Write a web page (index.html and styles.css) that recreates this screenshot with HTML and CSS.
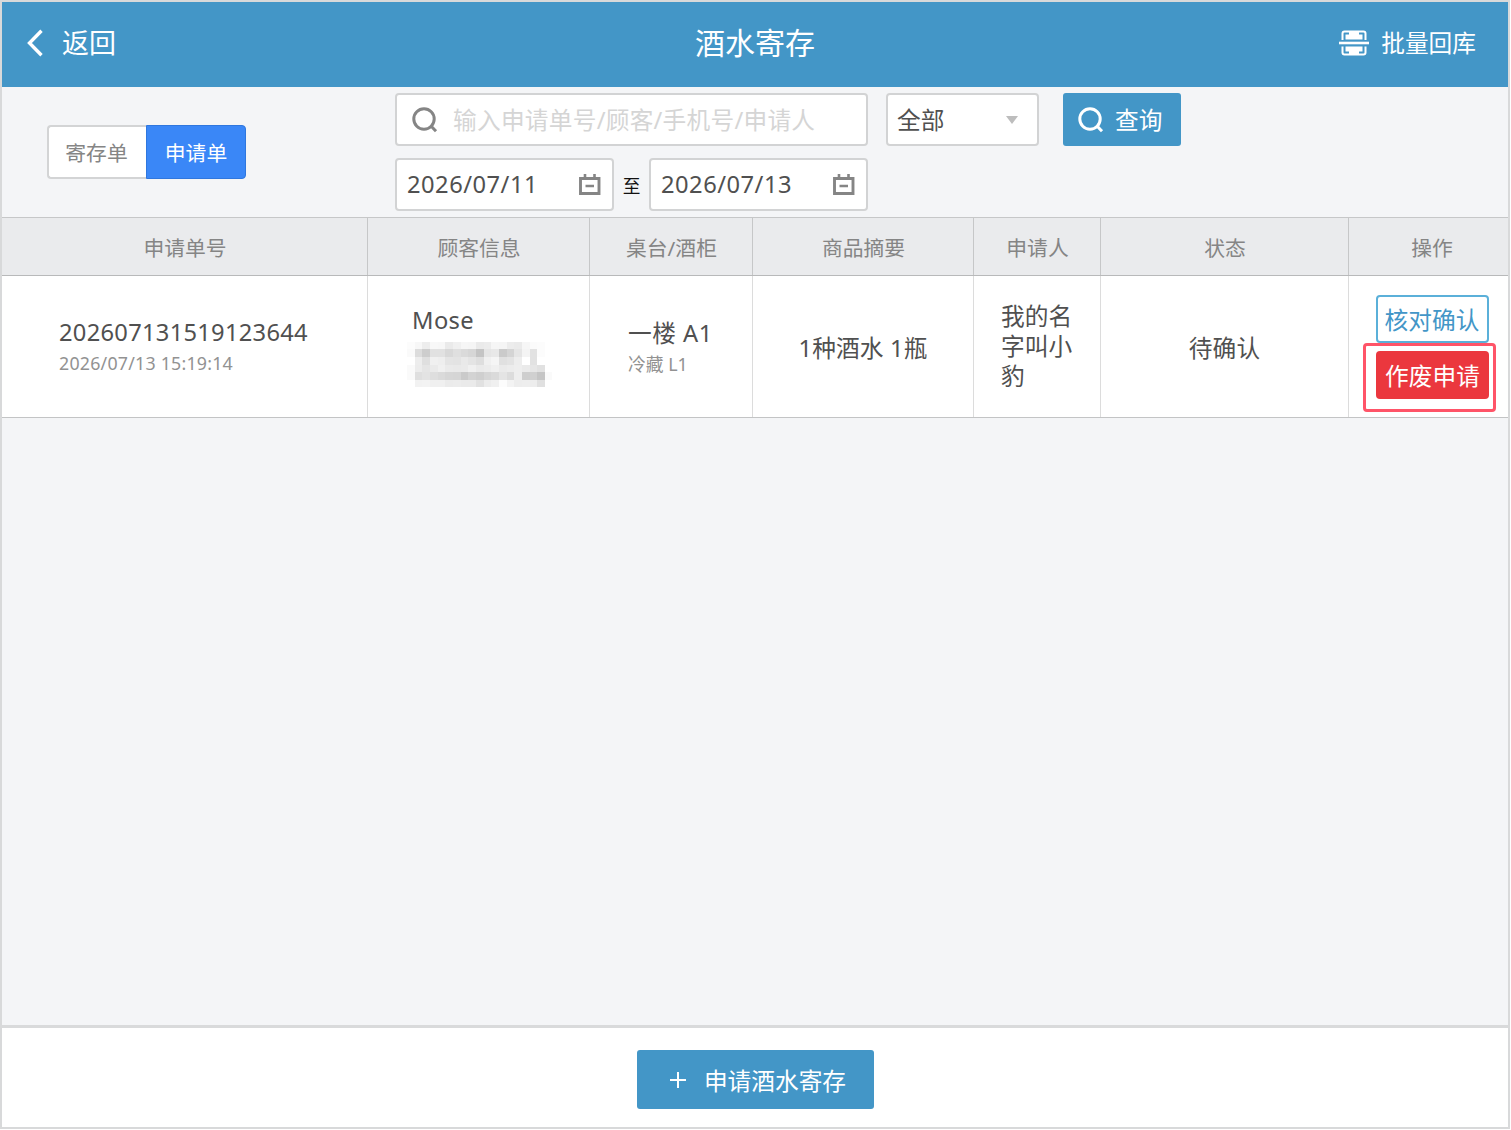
FILE: index.html
```html
<!DOCTYPE html>
<html lang="zh-CN">
<head>
<meta charset="utf-8">
<title>酒水寄存</title>
<link rel="stylesheet" href="styles.css">
</head>
<body>
<div class="app">
  <header class="topbar">
    <div class="back">
      <svg class="back-icon" width="18" height="28" viewBox="0 0 18 28"><path d="M15.500 1.800 3.500 14l12 12.200" fill="none" stroke="#fff" stroke-width="3.400"/></svg>
      <span>返回</span>
    </div>
    <h1 class="title">酒水寄存</h1>
    <div class="batch">
      <svg width="30" height="26" viewBox="0 0 30 26" fill="none" stroke="#fff">
        <path d="M3.500 10V3.500Q3.500 1.500 5.500 1.500H24.500Q26.500 1.500 26.500 3.500V10M3.500 16.500V22.500Q3.500 24.500 5.500 24.500H24.500Q26.500 24.500 26.500 22.500V16.500" stroke-width="2"/>
        <path d="M0 13H30" stroke-width="2.600"/>
        <path d="M10 2H20V4.500H23.500V9.500H6.500V4.500H10ZM6.500 16.500H23.500V21.500H20V24H10V21.500H6.500Z" fill="#fff" stroke="none"/>
      </svg>
      <span>批量回库</span>
    </div>
  </header>

  <section class="filters">
    <div class="tabs">
      <button class="tab">寄存单</button>
      <button class="tab tab-active">申请单</button>
    </div>
    <div class="fields">
      <div class="line">
        <div class="box search">
          <svg width="26" height="26" viewBox="0 0 26 26" fill="none" stroke="#858585" stroke-width="3"><circle cx="12" cy="12" r="10.200"/><path d="M18.500 18.500 24 24.300"/></svg>
          <span class="placeholder">输入申请单号/顾客/手机号/申请人</span>
        </div>
        <div class="box select"><span>全部</span><i class="caret"></i></div>
        <button class="query">
          <svg width="26" height="26" viewBox="0 0 26 26" fill="none" stroke="#fff" stroke-width="3"><circle cx="12" cy="12" r="10.200"/><path d="M18.500 18.500 24 24.300"/></svg>
          <span>查询</span>
        </button>
      </div>
      <div class="line">
        <div class="box date"><span>2026/07/11</span>
          <svg width="22" height="22" viewBox="0 0 22 22" fill="none" stroke="#858585"><path d="M1.500 4.500H20V19.500H1.500Z" stroke-width="2.900"/><path d="M6 0V5M15.500 0V5M6.500 12H15" stroke-width="2.600"/></svg>
        </div>
        <span class="to">至</span>
        <div class="box date"><span>2026/07/13</span>
          <svg width="22" height="22" viewBox="0 0 22 22" fill="none" stroke="#858585"><path d="M1.500 4.500H20V19.500H1.500Z" stroke-width="2.900"/><path d="M6 0V5M15.500 0V5M6.500 12H15" stroke-width="2.600"/></svg>
        </div>
      </div>
    </div>
  </section>

  <section class="table">
    <div class="row head">
      <div>申请单号</div><div>顾客信息</div><div>桌台/酒柜</div><div>商品摘要</div><div>申请人</div><div>状态</div><div>操作</div>
    </div>
    <div class="row record">
      <div class="cell order"><p class="main">202607131519123644</p><p class="sub">2026/07/13 15:19:14</p></div>
      <div class="cell customer"><p class="main">Mose</p><div class="mosaic" id="mosaic"></div></div>
      <div class="cell place"><p class="main">一楼 A1</p><p class="sub">冷藏 L1</p></div>
      <div class="cell center">1种酒水 1瓶</div>
      <div class="cell applicant">我的名字叫小豹</div>
      <div class="cell center">待确认</div>
      <div class="cell actions">
        <button class="confirm">核对确认</button>
        <div class="highlight"><button class="void">作废申请</button></div>
      </div>
    </div>
  </section>

  <footer class="bottombar">
    <button class="create">
      <svg width="18" height="18" viewBox="0 0 18 18"><path d="M9 1V17M1 9H17" stroke="#fff" stroke-width="2"/></svg>
      <span>申请酒水寄存</span>
    </button>
  </footer>
</div>
<script src="mosaic.js"></script>
</body>
</html>
```
FILE: styles.css
```css
* { box-sizing: border-box; }
body {
  margin: 0;
  background: #fff;
  color: #505050;
  font-family: "Noto Sans", "Noto Sans CJK SC", sans-serif;
  font-size: 23.7px;
}
h1, p { margin: 0; font-weight: 400; }
button { margin: 0; padding: 0; border: 0; font: inherit; }
svg { display: block; flex: none; }

.app {
  display: flex;
  flex-direction: column;
  width: 1510px;
  height: 1129px;
  border: 2px solid #d8d9da;
  background: #f4f5f7;
}

.topbar {
  display: grid;
  grid-template-columns: 1fr auto 1fr;
  align-items: center;
  height: 85px;
  padding: 0 32px 3px 24px;
  background: #4396c7;
  color: #fff;
}
.back { display: flex; align-items: center; gap: 18px; font-size: 27px; line-height: 40px; }
.title { padding-left: 8px; font-size: 30px; line-height: 40px; }
.batch { display: flex; align-items: center; justify-content: flex-end; gap: 12px; line-height: 36px; }

.filters { display: flex; height: 130px; padding-left: 45px; }
.tabs { display: flex; width: 199px; height: 54px; margin: 38px 149px 0 0; font-size: 20.8px; }
.tab {
  width: 99px;
  border: 2px solid #d3d4d5;
  border-right: 0;
  border-radius: 4px 0 0 4px;
  background: #fff;
  color: #858585;
}
.tab:first-child { padding-right: 2px; }
.tab-active {
  width: 100px;
  border: 1px solid #2f77de;
  border-radius: 0 4px 4px 0;
  background: #3a87f7;
  color: #fff;
}
.fields { display: flex; flex-direction: column; gap: 12px; padding-top: 6px; }
.line { display: flex; align-items: center; }
.box {
  display: flex;
  align-items: center;
  height: 53px;
  border: 2px solid #d2d3d4;
  border-radius: 4px;
  background: #fff;
}
.box span, .query span { margin-top: -1px; }
.search { width: 473px; margin-right: 18px; padding-left: 15px; gap: 15px; }
.placeholder { color: #d5d5d5; white-space: nowrap; letter-spacing: .25px; }
.select { width: 153px; margin-right: 24px; padding: 0 19px 0 9px; justify-content: space-between; }
.caret { border: 6px solid transparent; border-top: 8px solid #bdbdbd; border-bottom: 0; }
.query {
  display: flex;
  align-items: center;
  gap: 11px;
  width: 118px;
  height: 53px;
  padding-left: 15px;
  border-radius: 3px;
  background: #4396c7;
  color: #fff;
}
.date { width: 219px; padding: 0 11px 0 10px; justify-content: space-between; letter-spacing: .5px; }
.to { width: 35px; text-align: center; font-size: 17.7px; color: #111; }

.row { display: grid; grid-template-columns: 366px 222px 163px 221px 127px 248px 159px; }
.row > div { border-right: 1px solid #dcdcdc; }
.row > div:last-child { border-right: 0; }
.head {
  height: 59px;
  border-top: 1px solid #c6c7c8;
  border-bottom: 1px solid #b8b9ba;
  background: #eaebed;
  color: #858585;
  font-size: 20.8px;
}
.head > div { display: flex; align-items: center; justify-content: center; padding-left: 1px; border-right-color: #c6c7c8; }
.head > div:last-child { padding-left: 7px; }
.record { height: 142px; border-bottom: 1px solid #c3c4c5; background: #fff; }
.cell { display: flex; flex-direction: column; justify-content: center; }
.center { align-items: center; letter-spacing: .15px; }
.main { line-height: 32px; }
.sub { line-height: 30px; font-size: 17.8px; color: #929292; }
.order { padding: 1px 0 0 57px; }
.order .main { letter-spacing: .28px; }
.order .sub { letter-spacing: .22px; }
.customer { padding-left: 39px; }
.customer .main { margin-top: -2px; padding-left: 5px; letter-spacing: .4px; }
.place { padding: 2px 0 0 38px; }
.place .main { letter-spacing: .5px; }
.applicant { padding: 0 25px 1px 27px; line-height: 30px; }
.actions { align-items: center; justify-content: flex-start; padding: 19px 0 0 7px; }
.actions button { width: 113px; height: 48px; padding-bottom: 1px; border-radius: 4px; }
.confirm { border: 2px solid #5bb0d9; background: #fff; color: #4396c7; }
.highlight { width: 133px; height: 69px; padding: 5px 0 0 10px; margin-right: 5px; border: 3px solid #ff5468; border-radius: 4px; }
.void { background: #eb373e; color: #fff; }
.mosaic {
  display: grid;
  grid-template-columns: repeat(19, 7.67px);
  grid-auto-rows: 7.67px;
  margin-top: 6px;
}

.bottombar {
  display: flex;
  justify-content: center;
  align-items: center;
  height: 102px;
  margin-top: auto;
  padding: 4px 0 0 1px;
  border-top: 3px solid #d9dadb;
  background: #fff;
}
.create {
  display: flex;
  align-items: center;
  justify-content: center;
  gap: 17px;
  width: 237px;
  height: 59px;
  padding-left: 4px;
  border-radius: 3px;
  background: #4396c7;
  color: #fff;
}
```
FILE: mosaic.js
```javascript
// Gray levels of the masked phone number, one row of cells per line.
const levels = [
  'fc f7 ed f8 f7 ea f0 f6 f5 ea ec f6 f5 ec ea f6 fb fc ff',
  'fa dc cd e1 e1 d8 df da d6 c4 e5 e8 ca d4 e5 f4 e2 fc ff',
  'ff ed df f0 ee e4 e3 e9 e4 de f0 f5 e0 e3 ed ff e2 ff ff',
  'fa ec e5 ea f0 ea e9 ea f0 ea ec f0 ea ec ee ea e6 e1 ff',
  'fa df e3 de da d6 d5 ca d3 cf d6 da e4 dc ee ce d0 c5 fa',
  'ff f2 f3 f0 f0 eb ec ea ea e1 ec f0 fc f3 ed ee ed e0 ff'
];
const mosaic = document.getElementById('mosaic');
levels.join(' ').split(' ').forEach(level => {
  const cell = document.createElement('i');
  cell.style.background = '#' + level.repeat(3);
  mosaic.appendChild(cell);
});
```
